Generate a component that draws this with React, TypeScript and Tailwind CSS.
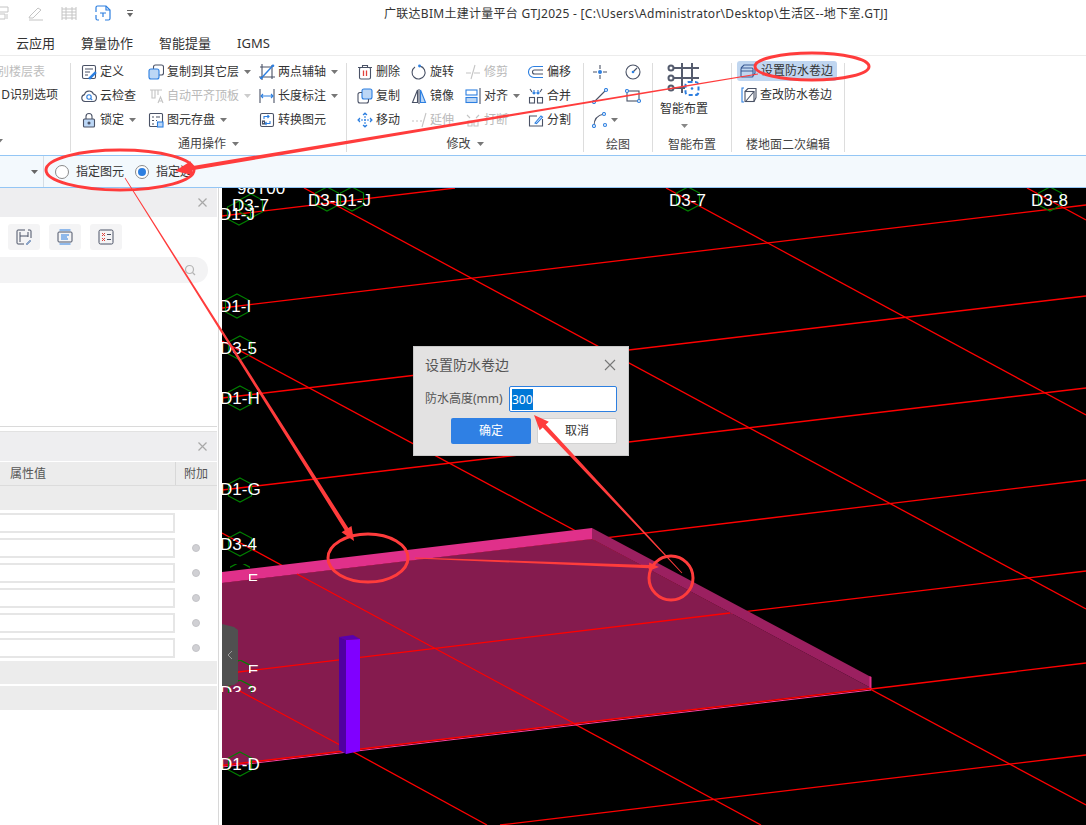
import React from 'react';

const DK = '#4a5266';
const BL = '#2d7fe0';
const LT = '#bcd7f6';
const GR = '#c4c4c4';

const Ico: React.FC<{ children: React.ReactNode; w?: number; h?: number }> = ({ children, w = 16, h = 16 }) => (
  <svg width={w} height={h} viewBox={`0 0 ${w} ${h}`} fill="none" stroke={DK} strokeWidth="1.1" className="shrink-0">
    {children}
  </svg>
);

const Caret = ({ className = 'ml-[2px]', color = '#777' }: { className?: string; color?: string }) => (
  <svg width="7" height="4" viewBox="0 0 7 4" className={`shrink-0 ${className}`}>
    <polygon points="0,0 7,0 3.5,4" fill={color} />
  </svg>
);

const icons: Record<string, React.ReactNode> = {
  define: (
    <Ico>
      <rect x="1.5" y="1.5" width="13" height="13" rx="1.5" />
      <path d="M4 5h8M4 8h5M4 11h3" />
      <path d="M8 14l6-6 1 1-6 6z" fill={BL} stroke={BL} />
    </Ico>
  ),
  cloud: (
    <Ico>
      <path d="M4 13.5a3.5 3.5 0 0 1-.5-6.9A4.7 4.7 0 0 1 12.4 6 3.8 3.8 0 0 1 12 13.5z" />
      <circle cx="8" cy="9" r="2.2" stroke={BL} />
      <path d="M9.7 10.7l1.6 1.4" stroke={BL} />
    </Ico>
  ),
  lock: (
    <Ico>
      <rect x="2.5" y="7" width="11" height="8" rx="1" fill={LT} />
      <path d="M5 7V4.5a3 3 0 0 1 6 0V7" />
      <circle cx="8" cy="11" r="1" fill={DK} />
    </Ico>
  ),
  copyLayer: (
    <Ico>
      <rect x="5.5" y="1" width="10" height="10" rx="2" />
      <rect x="1" y="5" width="10" height="10" rx="2" fill={LT} stroke={BL} />
    </Ico>
  ),
  autoAlign: (
    <Ico>
      <path d="M2 2h12M4 2v8h3V2M10 2v5" stroke={GR} />
      <path d="M10 15l2.5-6 2.500 6M11 13h3" stroke={GR} />
    </Ico>
  ),
  store: (
    <Ico>
      <rect x="1.5" y="1.5" width="13" height="13" rx="1" />
      <path d="M4 5h2M8 5h4M4 8.500h2M8 8.500h1M4 12h2" />
      <rect x="9.500" y="10" width="5.500" height="5" fill={LT} stroke={BL} />
    </Ico>
  ),
  axis: (
    <Ico>
      <path d="M3 0v16M0 13h16M1 3h12M13 1v14" />
      <path d="M2 14.500L14 1.500" stroke={BL} strokeWidth="1.400" />
      <circle cx="14" cy="1.800" r="1.300" fill={BL} stroke="none" />
      <circle cx="2.200" cy="14" r="1.300" fill={BL} stroke="none" />
    </Ico>
  ),
  dim: (
    <Ico>
      <path d="M1 1v14M15 1v14" />
      <path d="M2 8h12M4 6l-2 2 2 2M12 6l2 2-2 2" stroke={BL} />
    </Ico>
  ),
  convert: (
    <Ico>
      <rect x="1.500" y="1.500" width="13" height="13" rx="1.500" />
      <path d="M5 7V4.500h5M8.500 3l1.500 1.500L8.500 6" stroke={BL} />
      <path d="M11 9v2.500H6M7.500 10 6 11.500 7.500 13" stroke={BL} />
      <rect x="3.500" y="9" width="2" height="3" />
    </Ico>
  ),
  trash: (
    <Ico>
      <rect x="2.500" y="3.500" width="11" height="11.500" rx="1.500" />
      <path d="M1 3.500h14M5.500 3.500V1.500h5v2" />
      <path d="M6.500 6.500v5.500M9.500 6.500v5.500" stroke="#e0403a" strokeWidth="1.300" />
    </Ico>
  ),
  rotate: (
    <Ico>
      <path d="M9 2.100A6.500 6.500 0 1 1 4 3" />
      <circle cx="8.500" cy="2" r="1.400" fill={BL} stroke="none" />
    </Ico>
  ),
  trim: (
    <Ico>
      <path d="M1 9h5M9 9h6" stroke={GR} />
      <path d="M10 1L6 15" stroke={GR} />
    </Ico>
  ),
  offset: (
    <Ico>
      <path d="M15 2.500H6a5.500 5.500 0 0 0 0 11h9" stroke={BL} />
      <path d="M15 6H6.500a2 2 0 0 0 0 4H15" />
    </Ico>
  ),
  copy: (
    <Ico>
      <rect x="5" y="1" width="10" height="10" rx="2" fill={LT} stroke={BL} />
      <path d="M5 4.500H3a2 2 0 0 0-2 2V13a2 2 0 0 0 2 2h6.500a2 2 0 0 0 2-2v-2" />
    </Ico>
  ),
  mirror: (
    <Ico>
      <path d="M6.500 2L1.500 14.500h5z" />
      <path d="M9.500 2l5 12.500h-5z" fill={LT} stroke={BL} />
      <path d="M8 1v15" stroke={DK} />
    </Ico>
  ),
  align: (
    <Ico>
      <rect x="1" y="2" width="11" height="5" fill="none" stroke={BL} />
      <rect x="1" y="9.500" width="11" height="5" fill={LT} stroke={BL} />
      <path d="M15 0v16" />
    </Ico>
  ),
  merge: (
    <Ico>
      <rect x="1.500" y="9.500" width="5" height="5.500" />
      <rect x="9.500" y="9.500" width="5" height="5.500" />
      <path d="M2 1l2 3M14 1l-2 3" stroke={DK} />
      <path d="M6 2v4M4.500 4.500 6 6l1.500-1.500M10 2v4M8.500 4.500 10 6l1.500-1.500" stroke={BL} />
    </Ico>
  ),
  move: (
    <Ico>
      <g stroke={BL}>
        <path d="M8 1v14M1 8h14" strokeDasharray="2 1" />
        <path d="M6 3l2-2 2 2M6 13l2 2 2-2M3 6L1 8l2 2M13 6l2 2-2 2" />
      </g>
    </Ico>
  ),
  extend: (
    <Ico>
      <path d="M1 9h2M5 9h2M9 9h2" stroke={GR} />
      <path d="M15 1l-4 14" stroke={GR} />
    </Ico>
  ),
  breakLine: (
    <Ico>
      <path d="M2 3l3 3M14 3l-3 3M3 9h4v5H3zM9 9h4v5H9z" stroke={GR} />
    </Ico>
  ),
  split: (
    <Ico>
      <path d="M9 4H1.500v10h13V7" />
      <path d="M7 11l6-7 1.500 1-6 6.500z" stroke={BL} />
    </Ico>
  ),
  point: (
    <Ico>
      <path d="M1 8h4M11 8h4M8 1v4M8 11v4" />
      <circle cx="8" cy="8" r="2" fill={BL} stroke="none" />
    </Ico>
  ),
  circle: (
    <Ico>
      <circle cx="8" cy="8" r="7" />
      <path d="M8 8l4-4" />
      <circle cx="8" cy="8" r="1.300" fill={BL} stroke="none" />
    </Ico>
  ),
  line: (
    <Ico>
      <path d="M2 14L14 2" />
      <circle cx="2" cy="14" r="1.500" fill="#fff" stroke={BL} />
      <circle cx="14" cy="2" r="1.500" fill="#fff" stroke={BL} />
    </Ico>
  ),
  rect: (
    <Ico>
      <rect x="2" y="3" width="12" height="10" />
      <circle cx="2" cy="3" r="1.500" fill="#fff" stroke={BL} />
      <circle cx="14" cy="13" r="1.500" fill="#fff" stroke={BL} />
    </Ico>
  ),
  arc: (
    <Ico>
      <path d="M2 14C2 7 6 3 12 2" />
      <circle cx="2" cy="14" r="1.500" fill="#fff" stroke={BL} />
      <circle cx="12" cy="2" r="1.500" fill="#fff" stroke={BL} />
      <circle cx="13" cy="13" r="1.500" fill="#fff" stroke={BL} />
    </Ico>
  ),
  setEdge: (
    <Ico>
      <rect x="1" y="5" width="12" height="9" rx="1" stroke="#3a5a94" />
      <path d="M1 5l3-3h11v8l-2 3M1 8h12" stroke="#3a5a94" />
    </Ico>
  ),
  editEdge: (
    <Ico>
      <path d="M3 1H1v14h2" stroke={BL} />
      <rect x="4" y="4.500" width="9" height="10" />
      <path d="M4 4.500l3-3h8v9l-2 4M5 14l8-9.500" />
    </Ico>
  ),
};

const Tool: React.FC<{ icon: string; label: string; caret?: boolean; off?: boolean }> = ({ icon, label, caret, off }) => (
  <div className={`h-6 flex items-center gap-[3px] whitespace-nowrap ${off ? 'text-[#b9b9b9]' : 'text-[#333]'}`}>
    {icons[icon]}
    <span>{label}</span>
    {caret && <Caret color={off ? '#ccc' : '#777'} />}
  </div>
);

const Divider = () => <div className="w-px my-[3px] bg-[#dddddd] shrink-0" />;

const GroupLabel: React.FC<{ label: string; caret?: boolean; low?: boolean }> = ({ label, caret, low }) => (
  <div className={`h-6 flex items-center justify-center text-[#444] ${low ? 'pt-[3px]' : ''}`}>
    {label}
    {caret && <Caret className="ml-[6px]" />}
  </div>
);

const Ribbon = () => (
  <div className="h-[99px] flex pt-[4px] text-[12px] bg-white shrink-0">
    <div className="w-[70px] shrink-0 flex flex-col items-end overflow-hidden pb-[3px]">
      <div className="h-6 flex items-center pr-[25px] text-[#bdbdbd] whitespace-nowrap">别楼层表</div>
      <div className="h-6 flex items-center pr-[12px] text-[#333] whitespace-nowrap">D识别选项</div>
      <div className="h-6" />
      <div className="h-6 w-full flex items-center">
        <Caret className="-ml-[4px]" />
      </div>
    </div>
    <Divider />
    <div className="w-[275px] shrink-0 flex flex-col">
      <div className="flex pl-[10px]">
        <div className="w-[67px]">
          <Tool icon="define" label="定义" />
          <Tool icon="cloud" label="云检查" />
          <Tool icon="lock" label="锁定" caret />
        </div>
        <div className="w-[111px]">
          <Tool icon="copyLayer" label="复制到其它层" caret />
          <Tool icon="autoAlign" label="自动平齐顶板" caret off />
          <Tool icon="store" label="图元存盘" caret />
        </div>
        <div>
          <Tool icon="axis" label="两点辅轴" caret />
          <Tool icon="dim" label="长度标注" caret />
          <Tool icon="convert" label="转换图元" />
        </div>
      </div>
      <GroupLabel label="通用操作" caret />
    </div>
    <Divider />
    <div className="w-[236px] shrink-0 flex flex-col">
      <div className="flex pl-[10px]">
        <div className="w-[54px]">
          <Tool icon="trash" label="删除" />
          <Tool icon="copy" label="复制" />
          <Tool icon="move" label="移动" />
        </div>
        <div className="w-[54px]">
          <Tool icon="rotate" label="旋转" />
          <Tool icon="mirror" label="镜像" />
          <Tool icon="extend" label="延伸" off />
        </div>
        <div className="w-[63px]">
          <Tool icon="trim" label="修剪" off />
          <Tool icon="align" label="对齐" caret />
          <Tool icon="breakLine" label="打断" off />
        </div>
        <div>
          <Tool icon="offset" label="偏移" />
          <Tool icon="merge" label="合并" />
          <Tool icon="split" label="分割" />
        </div>
      </div>
      <GroupLabel label="修改" caret />
    </div>
    <Divider />
    <div className="w-[68px] shrink-0 flex flex-col">
      <div className="grid grid-cols-[33px_1fr] pl-[8px]">
        <div className="h-6 flex items-center">{icons.point}</div>
        <div className="h-6 flex items-center">{icons.circle}</div>
        <div className="h-6 flex items-center">{icons.line}</div>
        <div className="h-6 flex items-center">{icons.rect}</div>
        <div className="h-6 flex items-center col-span-2">
          {icons.arc}
          <Caret className="ml-[3px]" />
        </div>
      </div>
      <GroupLabel label="绘图" low />
    </div>
    <Divider />
    <div className="w-[78px] shrink-0 flex flex-col">
      <div className="w-[48px] ml-[7px] h-[72px] flex flex-col items-center text-[#333]">
        <svg width="34" height="34" viewBox="0 0 34 34" fill="none" stroke="#555c6e" strokeWidth="2" className="mt-[2px] shrink-0">
          <path d="M4 6h28M4 16h28M4 26h14M15 1v30M25 1v18" />
          <circle cx="4" cy="6" r="2.500" fill="#fff" />
          <circle cx="4" cy="16" r="2.500" fill="#fff" />
          <circle cx="4" cy="26" r="2.500" fill="#fff" />
          <rect x="18.500" y="20" width="13" height="13" rx="3" fill="#fff" stroke={BL} strokeWidth="2" strokeDasharray="4 2.500" />
          <circle cx="25" cy="26.500" r="1.300" fill={BL} stroke="none" />
        </svg>
        <div className="mt-[3px] leading-[20px] whitespace-nowrap">智能布置</div>
        <Caret className="mt-[5px]" color="#888" />
      </div>
      <GroupLabel label="智能布置" low />
    </div>
    <Divider />
    <div className="w-[112px] shrink-0 flex flex-col">
      <div className="h-[72px] pl-[5px] pt-[1px]">
        <div className="w-[100px] h-[20px] rounded-[3px] bg-[#c0d6f0] flex items-center gap-[5px] pl-[3px] text-[#333] whitespace-nowrap">
          {icons.setEdge}
          设置防水卷边
        </div>
        <div className="mt-[2px] h-6 flex items-center gap-[3px] pl-[4px] text-[#333] whitespace-nowrap">
          {icons.editEdge}
          查改防水卷边
        </div>
      </div>
      <GroupLabel label="楼地面二次编辑" low />
    </div>
    <Divider />
  </div>
);

const OptionsBar = () => (
  <div className="h-[33px] shrink-0 bg-[#f3f9fd] border-y border-[#93c6f5] flex items-center text-[12px] text-[#333]">
    <div className="w-[44px] h-full flex items-center justify-end pr-[5px] border-r border-[#d5dde4]">
      <Caret className="" color="#666" />
    </div>
    <div className="w-[14px] h-[14px] ml-[11px] rounded-full border border-[#8a8a8a] bg-white shrink-0" />
    <span className="ml-[7px]">指定图元</span>
    <div className="w-[14px] h-[14px] ml-[11px] rounded-full border border-[#8a8a8a] bg-white flex items-center justify-center shrink-0">
      <div className="w-[8px] h-[8px] rounded-full bg-[#2d7fe0]" />
    </div>
    <span className="ml-[7px]">指定边</span>
  </div>
);

const CloseX = () => (
  <svg width="9" height="9" viewBox="0 0 9 9" stroke="#a8a8a8" strokeWidth="1.200" className="shrink-0">
    <path d="M0.500 0.500l8 8M8.500 0.500l-8 8" />
  </svg>
);

const PanelHeader = ({ h }: { h: string }) => (
  <div className={`${h} bg-[#eeeef0] flex items-center justify-end pr-[10px]`}>
    <CloseX />
  </div>
);

const LeftPanel = () => (
  <div className="w-[219px] shrink-0 bg-white border-r border-[#d8d8d8] flex flex-col text-[12px] text-[#555]">
    <div className="h-[239px] border-b border-[#dadada] mr-px shrink-0">
      <PanelHeader h="h-[29px]" />
      <div className="flex gap-[9px] pl-[8px] pt-[7px]">
        <div className="w-[32px] h-[26px] rounded-[3px] bg-[#f4f4f5] flex items-center justify-center">
          <svg width="16" height="16" viewBox="0 0 16 16" fill="none" stroke={DK} strokeWidth="1">
            <path d="M9 1H2a1 1 0 0 0-1 1v12a1 1 0 0 0 1 1h6M15 9V2a1 1 0 0 0-1-1h-2" />
            <path d="M4 3v10M4 7h8M12 3v5" />
            <path d="M10 15l4-4 1 1-4 4z" fill="#8ea6c8" stroke="#8ea6c8" />
          </svg>
        </div>
        <div className="w-[32px] h-[26px] rounded-[3px] bg-[#f4f4f5] flex items-center justify-center">
          <svg width="16" height="16" viewBox="0 0 16 16" fill="none" stroke={DK} strokeWidth="1">
            <path d="M2.500 1h11M2.500 15h11" stroke={BL} />
            <rect x="1" y="3" width="14" height="10" rx="1" />
            <path d="M4 6h8M4 8h6M4 10h7" stroke={BL} />
          </svg>
        </div>
        <div className="w-[32px] h-[26px] rounded-[3px] bg-[#f4f4f5] flex items-center justify-center">
          <svg width="16" height="16" viewBox="0 0 16 16" fill="none" stroke={DK} strokeWidth="1">
            <rect x="1" y="1" width="14" height="14" rx="1.500" />
            <path d="M9 5.500h4M9 10.500h4" />
            <path d="M4 4l3 3M7 4L4 7M4 9l3 3M7 9l-3 3" stroke="#e0403a" />
          </svg>
        </div>
      </div>
      <div className="mt-[7px] h-[26px] w-[208px] rounded-r-full bg-[#f3f3f4] flex items-center justify-end pr-[12px]">
        <svg width="12" height="12" viewBox="0 0 12 12" fill="none" stroke="#b4b4b4" strokeWidth="1.200">
          <circle cx="5.500" cy="5.500" r="4" />
          <path d="M8.500 8.500L11 11" />
        </svg>
      </div>
    </div>
    <div className="mt-[4px] flex-1 border-t border-[#e2e2e2] mr-px">
      <PanelHeader h="h-[29px]" />
      <div className="h-[24px] mt-px bg-[#ececec] border-b border-[#dcdcdc] flex items-center">
        <div className="w-[176px] h-full pl-[10px] flex items-center border-r border-[#d8d8d8]">属性值</div>
        <div className="pl-[8px]">附加</div>
      </div>
      <div className="h-[24px] bg-[#ececec]" />
      <div className="flex flex-col gap-[5px] pt-[3px]">
        {[false, true, true, true, true, true].map((dot, i) => (
          <div key={i} className="h-[20px] flex items-center">
            <div className="w-[175px] h-full border-2 border-l-0 border-[#e6e6e6] bg-white" />
            {dot && <div className="ml-[17px] w-[8px] h-[8px] rounded-full bg-[#d0d0d4] border border-[#c4c4c8]" />}
          </div>
        ))}
      </div>
      <div className="h-[23px] mt-[3px] bg-[#ececec]" />
      <div className="h-[24px] mt-[2px] bg-[#ececec]" />
    </div>
  </div>
);

const Hex = ({ x, y, clip }: { x: number; y: number; clip?: string }) => (
  <polygon
    points={`${x},${y - 12} ${x + 11.500},${y - 6} ${x + 11.500},${y + 6} ${x},${y + 12} ${x - 11.500},${y + 6} ${x - 11.500},${y - 6}`}
    fill="none"
    stroke="#008000"
    strokeWidth="1.200"
    clipPath={clip}
  />
);

const Label = ({ x, y, t, clip }: { x: number; y: number; t: string; clip?: string }) => (
  <text x={x} y={y} fill="#fff" fontSize="17" fontFamily="'Liberation Sans', sans-serif" clipPath={clip}>
    {t}
  </text>
);

const Grid = () => {
  const rows: [number, number, number, number][] = [
    [222, 216, 455, 188],
    [222, 308, 1086, 205],
    [222, 398, 1086, 296],
    [222, 490, 1086, 388],
    [222, 584, 1086, 480],
    [222, 674, 1086, 571],
    [500, 825, 1086, 755],
    [871, 689, 1086, 663],
  ];
  const cols: [number, number, number, number][] = [
    [304, 188, 1086, 609],
    [666, 188, 1086, 415],
    [1027, 188, 1086, 220],
    [222, 341, 1086, 805],
    [222, 533, 761, 825],
    [222, 680, 487, 825],
  ];
  return (
    <g stroke="#ff0000" strokeWidth="1.300">
      {[...rows, ...cols].map(([a, b, c, d], i) => (
        <line key={i} x1={a} y1={b} x2={c} y2={d} />
      ))}
    </g>
  );
};

const Canvas = () => (
  <div className="flex-1 ml-[3px] bg-black relative overflow-hidden">
    <svg width="864" height="637" viewBox="222 188 864 637" className="block">
      <defs>
        <clipPath id="c-f"><rect x="249" y="574" width="12" height="7" /></clipPath>
        <clipPath id="c-e"><rect x="249" y="665" width="12" height="8" /></clipPath>
        <clipPath id="c-3"><rect x="222" y="686" width="40" height="6" /></clipPath>
        <clipPath id="h-f"><rect x="230" y="564" width="20" height="12" /></clipPath>
        <clipPath id="h-e"><rect x="230" y="660" width="20" height="12" /></clipPath>
        <clipPath id="h-3"><rect x="226" y="680" width="26" height="13" /></clipPath>
      </defs>
      <Grid />
      <Hex x={240} y={348} />
      <Hex x={240} y={398} />
      <Hex x={240} y={490} />
      <Hex x={240} y={544} />
      <Hex x={237} y={306} />
      <Hex x={239} y={213} />
      <Hex x={251} y={206} />
      <Hex x={327} y={199} />
      <Hex x={352} y={199} />
      <Hex x={688} y={199} />
      <Hex x={1050} y={199} />
      <Label x={237} y={193.500} t="98T00" />
      <Label x={232} y={211} t="D3-7" />
      <Label x={219} y={220} t="D1-J" />
      <Label x={308} y={206} t="D3-" />
      <Label x={335} y={206} t="D1-J" />
      <Label x={669} y={206} t="D3-7" />
      <Label x={1031} y={206} t="D3-8" />
      <Label x={219} y={312} t="D1-I" />
      <Label x={220} y={354} t="D3-5" />
      <Label x={220} y={404} t="D1-H" />
      <Label x={220} y={495} t="D1-G" />
      <Label x={220} y={550} t="D3-4" />

      <polygon points="222,583 592,539 871,688 222,766" fill="#851b4e" />
      <polygon points="592,528 871,677 871,688 592,539" fill="#9b2060" />
      <polygon points="222,572 592,528 592,539 222,583" fill="#e0308a" />
      <polygon points="869.500,676 871.500,677 871.500,689 869.500,689" fill="#e0308a" />
      <g stroke="#ff0000" strokeWidth="1.300">
        <line x1="222" y1="674" x2="730" y2="613" />
        <line x1="297" y1="574" x2="577" y2="725" />
        <line x1="238" y1="690" x2="340" y2="745" />
      </g>
      <line x1="222" y1="767" x2="871" y2="690" stroke="#ff40a0" strokeWidth="1" />
      <line x1="222" y1="765.500" x2="871" y2="688.500" stroke="#ff0000" strokeWidth="1.500" />

      <polygon points="346,640 360,639 360,751 346,754" fill="#8000ff" />
      <polygon points="339,637 346,640 346,754 339,750" fill="#5000a0" />
      <polygon points="339,637 353,635 360,639 346,640" fill="#5a00b0" />

      <Hex x={240} y={574} clip="url(#h-f)" />
      <Hex x={240} y={672} clip="url(#h-e)" />
      <Hex x={240} y={692} clip="url(#h-3)" />
      <Label x={220} y={586} t="D1-F" clip="url(#c-f)" />
      <Label x={220} y={677} t="D1-E" clip="url(#c-e)" />
      <Label x={220} y={698} t="D3-3" clip="url(#c-3)" />
      <Hex x={240} y={764} />
      <Label x={220} y={770} t="D1-D" />

      <polygon points="222,624 234,627 238,630 238,682 234,685 222,686" fill="#505050" />
      <path d="M232 651l-4 4 4 4" fill="none" stroke="#9a9a9a" strokeWidth="1" />
    </svg>

    <div className="absolute left-[191px] top-[158px] w-[216px] h-[110px] bg-[#e3e2e2] border border-[#c9c9c9] text-[#555]">
      <div className="flex items-center justify-between pl-[11px] pr-[12px] pt-[8px] text-[14px] leading-[20px]">
        设置防水卷边
        <svg width="12" height="12" viewBox="0 0 12 12" stroke="#777" strokeWidth="1.100">
          <path d="M1 1l10 10M11 1L1 11" />
        </svg>
      </div>
      <div className="flex items-center pl-[11px] mt-[11px] text-[12px]">
        <span className="w-[84px] whitespace-nowrap">防水高度(mm)</span>
        <div className="w-[108px] h-[26px] rounded-[2px] border border-[#2d7fe0] bg-white flex items-center pl-[2px] text-[12px] text-white">
          <span className="bg-[#0078d7] leading-[21px]">300</span>
        </div>
      </div>
      <div className="flex gap-[6px] pl-[37px] mt-[6px] text-[12px]">
        <div className="w-[80px] h-[26px] rounded-[2px] bg-[#2f80e4] text-white flex items-center justify-center">确定</div>
        <div className="w-[80px] h-[26px] rounded-[2px] bg-white border border-[#d2d2d2] text-[#333] flex items-center justify-center">取消</div>
      </div>
    </div>
  </div>
);

// tapered annotation arrow, thin at the tail
const arrowPoints = (x1: number, y1: number, x2: number, y2: number, w0: number, w1: number, head: number) => {
  const len = Math.hypot(x2 - x1, y2 - y1);
  const ux = (x2 - x1) / len;
  const uy = (y2 - y1) / len;
  const nx = -uy;
  const ny = ux;
  const bx = x2 - ux * head;
  const by = y2 - uy * head;
  const hw = head * 0.42;
  const p = [
    [x1 + (nx * w0) / 2, y1 + (ny * w0) / 2],
    [bx + (nx * w1) / 2, by + (ny * w1) / 2],
    [bx + nx * hw, by + ny * hw],
    [x2, y2],
    [bx - nx * hw, by - ny * hw],
    [bx - (nx * w1) / 2, by - (ny * w1) / 2],
    [x1 - (nx * w0) / 2, y1 - (ny * w0) / 2],
  ];
  return p.map((q) => q.join(',')).join(' ');
};

const Annotations = () => (
  <svg width="1086" height="825" viewBox="0 0 1086 825" className="absolute inset-0 pointer-events-none">
    <g fill="#ff3c3c">
      <polygon points={arrowPoints(758, 74, 175, 171, 0.8, 4.2, 17)} />
      <polygon points={arrowPoints(125, 178, 354, 541, 0.8, 4.2, 14)} />
      <polygon points={arrowPoints(415, 558, 659, 567, 0.8, 3.4, 10)} />
      <polygon points={arrowPoints(682, 573, 534, 415, 0.8, 4.2, 15)} />
    </g>
    <g fill="none" stroke="#ff3c3c" strokeWidth="3">
      <ellipse cx="120" cy="170" rx="74" ry="20" />
      <ellipse cx="812" cy="66.500" rx="57" ry="13.500" />
      <ellipse cx="368" cy="558" rx="40" ry="24" />
      <circle cx="671" cy="578" r="22" />
    </g>
  </svg>
);

export default function App() {
  return (
    <div className="relative w-[1086px] h-[825px] overflow-hidden flex flex-col bg-white font-['Noto_Sans','Noto_Sans_CJK_SC',sans-serif]">
      <div className="h-[28px] shrink-0 flex items-center text-[12px] text-[#333]">
        <div className="w-[384px] shrink-0 flex items-center -mt-[2px]">
          <svg width="9" height="14" viewBox="0 0 9 14" fill="none" stroke={GR} strokeWidth="1">
            <path d="M0 1h8v5H0M0 8h5v5H0M7 8v5" />
          </svg>
          <svg width="16" height="16" viewBox="0 0 16 16" fill="none" stroke={GR} strokeWidth="1" className="ml-[19px]">
            <path d="M2 11l8-8 3 2-8 8H1zM1 15h14" />
          </svg>
          <svg width="16" height="15" viewBox="0 0 16 15" fill="none" stroke={GR} strokeWidth="1" className="ml-[17px]">
            <path d="M1 1v13M15 1v13M1 3h14M1 6h14M1 9h14M1 12h14M5 1v13M11 1v13" />
          </svg>
          <svg width="16" height="16" viewBox="0 0 16 16" fill="none" stroke={BL} strokeWidth="1.200" className="ml-[18px]">
            <path d="M1 7V2.500A1.500 1.500 0 0 1 2.500 1H11l4 4v8.500a1.500 1.500 0 0 1-1.500 1.500H10M1 10v3.500A1.500 1.500 0 0 0 2.500 15H4" />
            <path d="M5 8h6M8 8v4M11 1v4h4" />
          </svg>
          <svg width="6" height="7" viewBox="0 0 6 7" fill="#666" className="ml-[16px]">
            <path d="M0 0h6v1H0zM0 3h6L3 7z" />
          </svg>
        </div>
        <span className="whitespace-nowrap tracking-[0.28px]">广联达BIM土建计量平台 GTJ2025 - [C:\Users\Administrator\Desktop\生活区--地下室.GTJ]</span>
      </div>
      <div className="h-[28px] shrink-0 border-b border-[#ececec] flex items-center pl-[16px] gap-[26px] pt-[4px] text-[13px] text-[#333]">
        <span>云应用</span>
        <span>算量协作</span>
        <span>智能提量</span>
        <span>IGMS</span>
      </div>
      <Ribbon />
      <OptionsBar />
      <div className="flex-1 flex min-h-0">
        <LeftPanel />
        <Canvas />
      </div>
      <Annotations />
    </div>
  );
}
